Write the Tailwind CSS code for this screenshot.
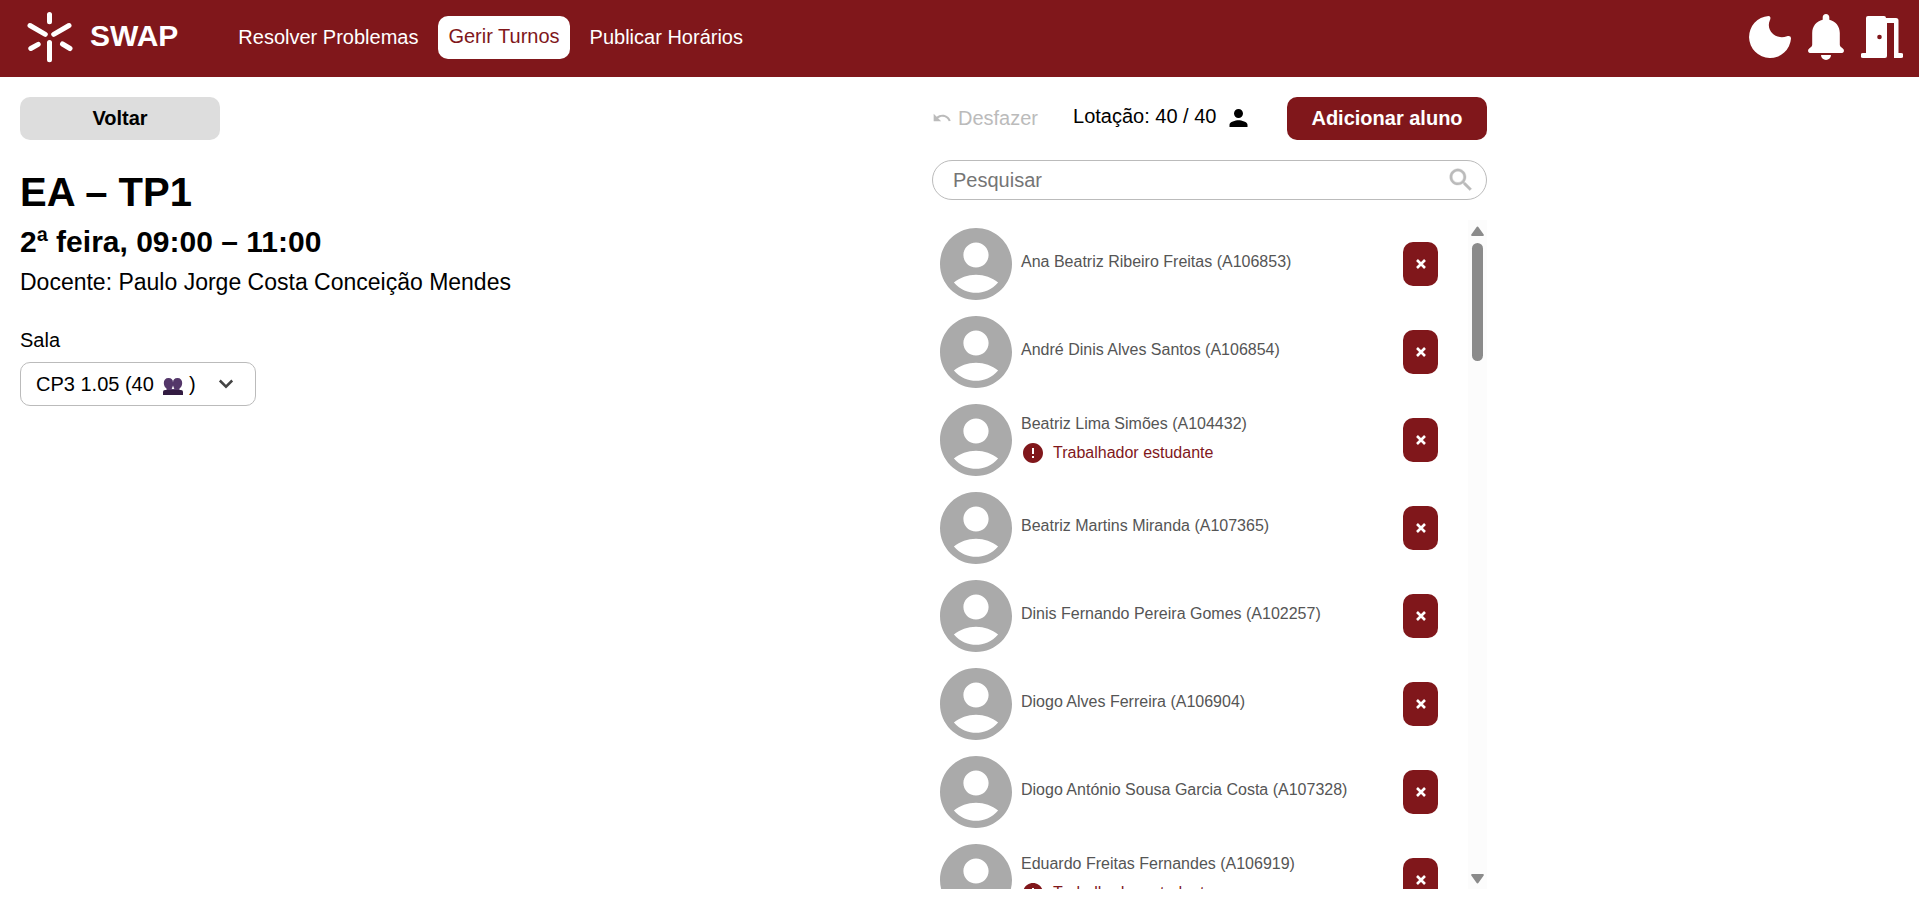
<!DOCTYPE html>
<html lang="pt">
<head>
<meta charset="utf-8">
<title>SWAP – Gerir Turnos</title>
<script src="https://cdn.jsdelivr.net/npm/@tailwindcss/browser@4"></script>
</head>
<body class="flex h-screen flex-col overflow-hidden bg-white font-['Liberation_Sans',Arial,sans-serif] text-xl leading-6 text-black">

<svg class="hidden" aria-hidden="true">
  <symbol id="avatar" viewBox="2 2 20 20"><path fill="#aaa" d="M12 2C6.48 2 2 6.48 2 12s4.48 10 10 10 10-4.48 10-10S17.52 2 12 2zm0 4c1.93 0 3.5 1.57 3.5 3.5S13.930 13 12 13s-3.500-1.570-3.500-3.500S10.070 6 12 6zm0 14c-2.030 0-4.430-.820-6.140-2.880C7.550 15.800 9.680 15 12 15s4.450.800 6.140 2.120C16.430 19.180 14.030 20 12 20z"/></symbol>
  <symbol id="alert" viewBox="0 0 24 24"><path fill="currentColor" d="M12 2C6.480 2 2 6.480 2 12s4.480 10 10 10 10-4.480 10-10S17.520 2 12 2zm1 15h-2v-2h2v2zm0-4h-2V7h2v6z"/></symbol>
  <symbol id="cross" viewBox="0 0 10 10"><path d="M1 1l8 8M9 1l-8 8" stroke="currentColor" stroke-width="2.600" fill="none"/></symbol>
</svg>

<header class="flex h-[77px] shrink-0 items-center bg-[#80171b] pr-4 pl-[27px] text-white">
  <a href="#" class="flex items-center gap-[17px] pb-[6px] text-[30px] leading-9 font-bold">
    <svg class="h-[55px] w-[46px]" viewBox="0 0 46 55" stroke="#fff" stroke-width="5" stroke-linecap="round" fill="none"><path d="M22.500 6.500v7.300M22.500 34.500v17.300M3 17.500l15.300 8.800M42 17.500l-15.300 8.800M3.800 40.500l7.400-4.200M43 40.500l-7.500-4.500"/></svg>
    SWAP
  </a>
  <nav class="ml-[52px] flex items-center gap-1 pb-[2px]">
    <a href="#" class="rounded-[10px] px-2 pt-2 pb-[10px]">Resolver Problemas</a>
    <a href="#" class="mx-2 rounded-[10px] bg-white px-[10px] pt-2 pb-[11px] text-[#80171b]">Gerir Turnos</a>
    <a href="#" class="rounded-[10px] px-2 pt-2 pb-[10px]">Publicar Horários</a>
  </nav>
  <div class="ml-auto flex items-center gap-[17px] pb-[3px]">
    <button type="button" aria-label="Modo escuro"><svg class="h-[46px] w-[42px]" viewBox="0 0 42 46" fill="#fff"><path d="M19.500 2A21 21 0 1 0 42 24.500C42 22 40 21.500 38 22.200C27 26.500 16.500 16 20.800 6.500C22 4 21.500 2 19.500 2z"/></svg></button>
    <button type="button" aria-label="Notificações"><svg class="h-[46px] w-[36px]" viewBox="0 0 36 46" fill="#fff"><path d="M18 0c-2 0-3.300 1.500-3.300 3.300V5.800C8.500 7 4.200 12.500 4.200 19v11.500c0 1.200-.500 2-1.500 2.700l-1.500 1.200C-.8 36 0 39 2 39h32c2 0 2.800-3 .8-4.600l-1.500-1.200c-1-.700-1.500-1.500-1.500-2.700V19c0-6.500-4.300-12-10.500-13.200V3.300C21.300 1.500 20 0 18 0zM13 41h10a5 5 0 0 1-10 0z"/></svg></button>
    <button type="button" aria-label="Sair"><svg class="h-[46px] w-[42px]" viewBox="0 0 42 46" fill="#fff"><path d="M7 2h16a2 2 0 0 1 2 2h10a2.500 2.500 0 0 1 2.500 2.500V39H40a2 2 0 0 1 0 5h-7V9h-7v33a2 2 0 0 1-2 2H2a2 2 0 0 1 0-5h3V4a2 2 0 0 1 2-2z"/><circle cx="18.500" cy="23" r="2.300" fill="#80171b"/></svg></button>
  </div>
</header>

<main class="grid min-h-0 flex-1 grid-cols-[912fr_555fr_412fr] px-5 pt-5 pb-[14px]">
  <section>
    <button type="button" class="h-[43px] w-[200px] rounded-[10px] bg-[#ddd] pb-[2px] font-bold">Voltar</button>
    <h1 class="mt-7 text-[40px] leading-[48px] font-bold">EA – TP1</h1>
    <h2 class="mt-2 text-[30px] leading-9 font-bold">2ª feira, 09:00 – 11:00</h2>
    <p class="mt-2 text-[23px] leading-7">Docente: Paulo Jorge Costa Conceição Mendes</p>
    <label for="sala" class="mt-8 block">Sala</label>
    <div class="relative mt-[10px] w-[236px]">
      <select id="sala" class="h-11 w-full appearance-none rounded-[10px] border border-[#bbb] bg-white px-[15px]">
        <option>CP3 1.05 (40&nbsp;&emsp;&nbsp;&thinsp;)</option>
      </select>
      <svg class="pointer-events-none absolute top-[16px] left-[143px] h-[17px] w-5" viewBox="0 0 20 17"><path fill="#54376a" d="M5.500 0C8.500 0 10 1.500 10 4.500C10 1.500 11.500 0 14.500 0S19.200 2 19.200 5S17.500 10 16.500 10.500V12.500H3.500V10.500C2.500 10 .800 8 .800 5S2.500 0 5.500 0z"/><path fill="#fff" d="M10 7.500l1.300 3.500H8.700z"/><path fill="#321b41" d="M0 17v-3q0-2 2-2h16q2 0 2 2v3z"/></svg>
      <svg class="pointer-events-none absolute top-[17px] left-[198px] h-[10px] w-4" viewBox="0 0 16 10" fill="none" stroke="#444" stroke-width="2.500"><path d="M1.800 1.500L8 7.700l6.200-6.200"/></svg>
    </div>
  </section>

  <section class="flex min-h-0 flex-col">
    <div class="flex h-[43px] shrink-0 items-center">
      <button type="button" disabled class="flex items-center gap-[6px] pb-px text-[#bbb]">
        <svg class="h-5 w-5" viewBox="0 0 24 24" fill="currentColor"><path d="M12.500 8c-2.650 0-5.050.990-6.900 2.600L2 7v9h9l-3.620-3.620c1.390-1.160 3.160-1.880 5.120-1.880 3.540 0 6.550 2.310 7.600 5.500l2.370-.780C21.080 11.030 17.150 8 12.500 8z"/></svg>
        Desfazer
      </button>
      <p class="ml-[35px] flex items-start gap-[9px] pb-[2px]">Lotação: 40 / 40
        <svg class="h-7 w-[27px]" viewBox="0 0 24 24"><path d="M12 12c2.210 0 4-1.790 4-4s-1.790-4-4-4-4 1.790-4 4 1.790 4 4 4zm0 2c-2.670 0-8 1.340-8 4v2h16v-2c0-2.660-5.330-4-8-4z"/></svg>
      </p>
      <button type="button" class="ml-auto h-[43px] w-[200px] rounded-[10px] bg-[#80171b] pb-[2px] font-bold text-white">Adicionar aluno</button>
    </div>

    <label class="mt-5 flex h-10 shrink-0 items-center rounded-full border border-[#bbb] pr-[10px] pl-5">
      <input type="search" aria-label="Pesquisar" placeholder="Pesquisar" class="min-w-0 flex-1 outline-none placeholder:text-[#757575]">
      <svg class="h-[30px] w-[30px]" viewBox="0 0 24 24" fill="#bbb" stroke="#bbb" stroke-width=".300"><path d="M15.500 14h-.790l-.280-.270C15.410 12.590 16 11.110 16 9.500 16 5.910 13.090 3 9.500 3S3 5.910 3 9.500 5.910 16 9.500 16c1.610 0 3.090-.590 4.230-1.570l.270.280v.790l5 4.990L20.490 19l-4.990-5zm-6 0C7.010 14 5 11.990 5 9.500S7.010 5 9.500 5 14 7.010 14 9.500 11.990 14 9.500 14z"/></svg>
    </label>

    <div class="mt-5 flex min-h-0 flex-1">
      <ul id="alunos" class="min-w-0 flex-1 overflow-hidden text-base leading-5 text-[#555]"></ul>
      <div class="flex w-[19px] flex-col items-center justify-between bg-[#fcfcfc] pt-[5px] pb-1" aria-hidden="true">
        <svg class="h-3 w-[13px] shrink-0" viewBox="0 0 13 12" fill="#8b8b8b"><path d="M5.300 2.400q1.200-1.800 2.400 0l5 7.100q.700 1.500-1 1.500H1.300q-1.700 0-1-1.500z"/></svg>
        <div class="mt-[6px] mb-auto h-[118px] w-[11px] rounded-full bg-[#8b8b8b]"></div>
        <svg class="h-3 w-[13px] shrink-0" viewBox="0 0 13 12" fill="#8b8b8b"><path d="M5.300 9.600q1.200 1.800 2.400 0l5-7.100q.700-1.500-1-1.500H1.300q-1.700 0-1 1.500z"/></svg>
      </div>
    </div>
  </section>
</main>

<template id="linha">
  <li class="flex h-[88px] items-center pr-[30px] pl-2">
    <svg class="h-[72px] w-[72px] shrink-0"><use href="#avatar"/></svg>
    <div class="ml-[9px] flex-1">
      <p class="nome mb-[5px]"></p>
      <p class="estatuto flex h-7 items-center gap-2 text-[#80171b]"><svg class="h-6 w-6"><use href="#alert"/></svg>Trabalhador estudante</p>
    </div>
    <button type="button" aria-label="Remover aluno" class="flex h-11 w-[35px] items-center justify-center rounded-[10px] bg-[#80171b] text-white"><svg class="h-[10px] w-[10px]"><use href="#cross"/></svg></button>
  </li>
</template>
<script>
  const alunos = [
    ['Ana Beatriz Ribeiro Freitas (A106853)', false],
    ['André Dinis Alves Santos (A106854)', false],
    ['Beatriz Lima Simões (A104432)', true],
    ['Beatriz Martins Miranda (A107365)', false],
    ['Dinis Fernando Pereira Gomes (A102257)', false],
    ['Diogo Alves Ferreira (A106904)', false],
    ['Diogo António Sousa Garcia Costa (A107328)', false],
    ['Eduardo Freitas Fernandes (A106919)', true],
  ];
  const lista = document.getElementById('alunos');
  for (const [nome, trabalhador] of alunos) {
    const linha = document.getElementById('linha').content.cloneNode(true);
    linha.querySelector('.nome').textContent = nome;
    if (!trabalhador) linha.querySelector('.estatuto').remove();
    lista.append(linha);
  }
</script>
</body>
</html>
